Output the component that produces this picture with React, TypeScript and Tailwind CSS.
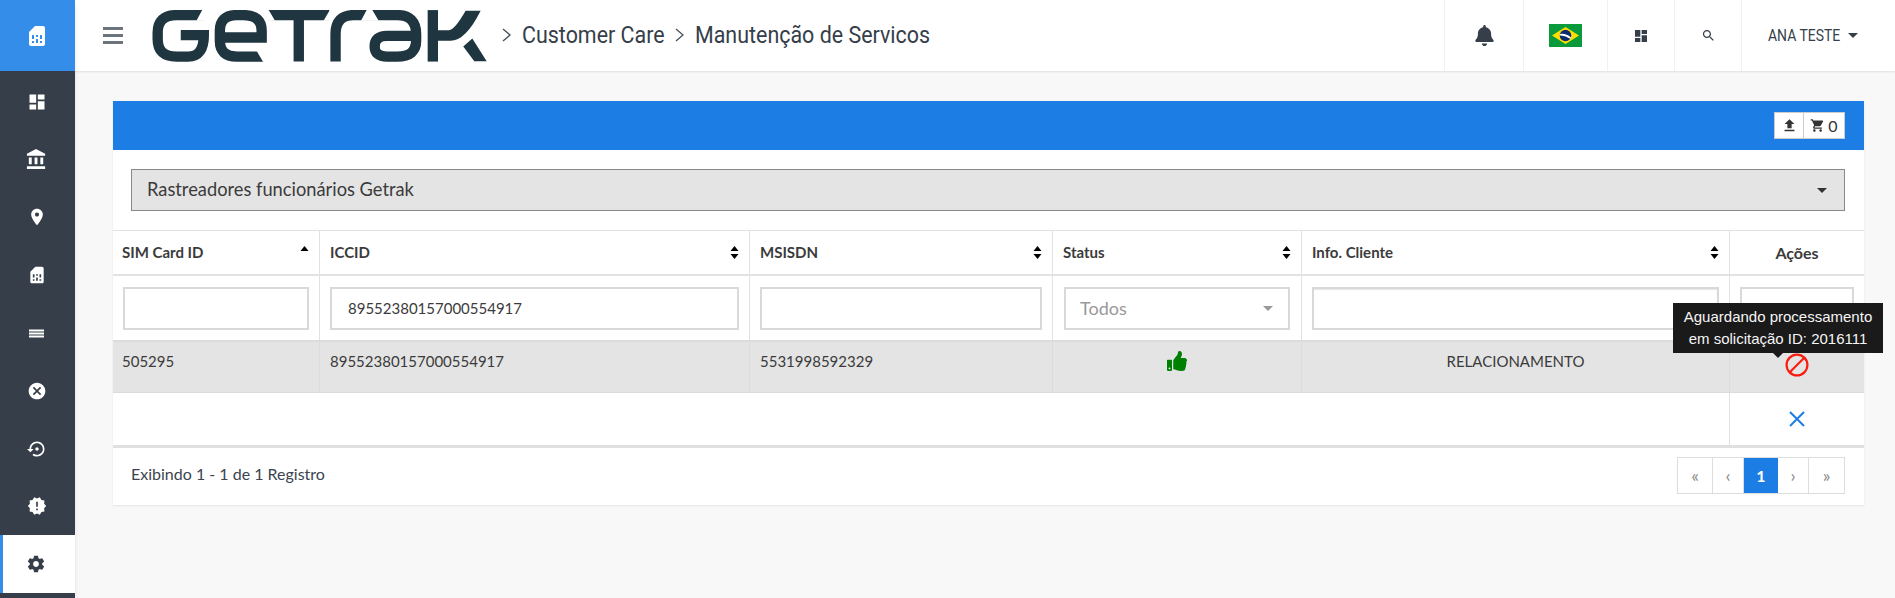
import React from 'react';
import { FaBell, FaThumbsUp } from 'react-icons/fa';

const ICONS = {
  sim: 'M19.99 4c0-1.1-.89-2-1.99-2h-8L4 8v12c0 1.1.9 2 2 2h12c1.1 0 2-.9 2-2l-.01-16zM9 19H7v-2h2v2zm8 0h-2v-2h2v2zm-8-4H7v-4h2v4zm4 4h-2v-4h2v4zm0-6h-2v-2h2v2zm4 2h-2v-4h2v4z',
  dashboard: 'M3 13h8V3H3v10zm0 8h8v-6H3v6zm10 0h8V11h-8v10zm0-18v6h8V3h-8z',
  bank: 'M4 10v7h3v-7H4zm6 0v7h3v-7h-3zM2 22h19v-3H2v3zm14-12v7h3v-7h-3zm-4.5-9L2 6v2h19V6l-9.5-5z',
  place: 'M12 2C8.13 2 5 5.13 5 9c0 5.25 7 13 7 13s7-7.75 7-13c0-3.87-3.13-7-7-7zm0 9.5c-1.38 0-2.5-1.12-2.5-2.5s1.12-2.5 2.5-2.5 2.5 1.12 2.5 2.5-1.12 2.5-2.5 2.5z',
  list: 'M2.5 7h19v2.6h-19zm0 3.7h19v2.6h-19zm0 3.7h19V17h-19z',
  cancel: 'M12 2C6.47 2 2 6.47 2 12s4.47 10 10 10 10-4.47 10-10S17.53 2 12 2zm5 13.59L15.59 17 12 13.41 8.41 17 7 15.59 10.59 12 7 8.41 8.41 7 12 10.59 15.59 7 17 8.41 13.41 12 17 15.59z',
  restore: 'M14 12c0-1.1-.9-2-2-2s-2 .9-2 2 .9 2 2 2 2-.9 2-2zm-2-9c-4.97 0-9 4.03-9 9H0l4 4 4-4H5c0-3.87 3.13-7 7-7s7 3.13 7 7-3.13 7-7 7c-1.51 0-2.91-.49-4.06-1.3l-1.42 1.44C8.04 20.3 9.94 21 12 21c4.97 0 9-4.03 9-9s-4.03-9-9-9z',
  release: 'M23 12l-2.44-2.78.34-3.68-3.61-.82-1.89-3.18L12 3 8.6 1.54 6.71 4.72l-3.61.81.34 3.68L1 12l2.44 2.78-.34 3.69 3.61.82 1.89 3.18L12 21l3.4 1.46 1.89-3.18 3.61-.82-.34-3.68L23 12zm-10 5h-2v-2h2v2zm0-4h-2V7h2v6z',
  settings: 'M19.43 12.98c.04-.32.07-.64.07-.98s-.03-.66-.07-.98l2.11-1.65c.19-.15.24-.42.12-.64l-2-3.46c-.12-.22-.39-.3-.61-.22l-2.49 1c-.52-.4-1.08-.73-1.69-.98l-.38-2.65C14.46 2.18 14.25 2 14 2h-4c-.25 0-.46.18-.49.42l-.38 2.65c-.61.25-1.17.59-1.69.98l-2.49-1c-.23-.09-.49 0-.61.22l-2 3.46c-.13.22-.07.49.12.64l2.11 1.65c-.04.32-.07.65-.07.98s.03.66.07.98l-2.11 1.65c-.19.15-.24.42-.12.64l2 3.46c.12.22.39.3.61.22l2.49-1c.52.4 1.08.73 1.69.98l.38 2.65c.03.24.24.42.49.42h4c.25 0 .46-.18.49-.42l.38-2.65c.61-.25 1.17-.59 1.69-.98l2.49 1c.23.09.49 0 .61-.22l2-3.46c.12-.22.07-.49-.12-.64l-2.11-1.65zM12 15.5c-1.93 0-3.5-1.57-3.5-3.5s1.57-3.5 3.5-3.5 3.5 1.57 3.5 3.5-1.57 3.5-3.5 3.5z',
  search: 'M15.5 14h-.79l-.28-.27C15.41 12.59 16 11.11 16 9.5 16 5.91 13.09 3 9.5 3S3 5.91 3 9.5 5.91 16 9.5 16c1.61 0 3.09-.59 4.23-1.57l.27.28v.79l5 4.99L20.49 19l-4.99-5zm-6 0C7.01 14 5 11.99 5 9.5S7.01 5 9.5 5 14 7.01 14 9.5 11.99 14 9.5 14z',
  upload: 'M9 16h6v-6h4l-7-7-7 7h4zm-4 2h14v2H5z',
  cart: 'M7 18c-1.1 0-1.99.9-1.99 2S5.9 22 7 22s2-.9 2-2-.9-2-2-2zM1 2v2h2l3.6 7.59-1.35 2.45c-.16.28-.25.61-.25.96 0 1.1.9 2 2 2h12v-2H7.42c-.14 0-.25-.11-.25-.25l.03-.12.9-1.63h7.45c.75 0 1.41-.41 1.75-1.03l3.58-6.49c.08-.14.12-.31.12-.48 0-.55-.45-1-1-1H5.21l-.94-2H1zm16 16c-1.1 0-1.99.9-1.99 2s.89 2 1.99 2 2-.9 2-2-.9-2-2-2z',
};

function Icon({ d, size = 20, className = '' }: { d: string; size?: number; className?: string }) {
  return (
    <svg width={size} height={size} viewBox="0 0 24 24" fill="currentColor" className={className}>
      <path d={d} />
    </svg>
  );
}

function Logo() {
  return (
    <svg width="335" height="52" viewBox="457 28 1002 155" fill="none" stroke="#1f3540" strokeWidth="31">
      <path d="M612 43 L530 43 Q474 43 474 95 L474 115 Q474 167 530 167 L565 167 Q612 167 612 103 L543 103" />
      <path d="M798 167 L710 167 Q660 167 660 120 L660 90 Q660 43 710 43 L730 43 Q785 43 785 90 L785 110 L672 110" />
      <path d="M800 43 L988 43 M896 43 L896 182" />
      <path stroke="none" fill="#fff" d="M990 26 L970 60 L991 60 L991 26 Z" />
      <path d="M1006 182 L1006 100 Q1006 43 1060 43 L1106 43" />
      <path d="M1108 43 L1190 43 Q1247 43 1247 100 L1247 120 Q1247 167 1190 167 L1160 167 Q1123 167 1123 137 Q1123 105 1160 105 L1240 105" />
      <path d="M1297 28 L1297 182" />
      <path stroke="none" fill="#1f3540" d="M1312 88 L1345 88 Q1362 88 1395 30 L1440 30 Q1395 120 1350 120 L1312 120 Z M1415 113 L1458 181 L1421 181 L1388 137 Z" />
      <path stroke="none" fill="#fff" d="M608 26 L590 60 L616 60 L616 26 Z M805 26 L825 60 L798 60 L798 26 Z M1100 26 L1082 60 L1108 60 L1108 26 Z M1115 26 L1135 60 L1108 60 L1108 26 Z M770 150 L790 184 L802 184 L802 150 Z" />
    </svg>
  );
}

function Chevron() {
  return (
    <svg width="9" height="14" viewBox="0 0 9 14" fill="none" stroke="#4a5560" strokeWidth="1.4" className="shrink-0">
      <path d="M1 1 L8 7 L1 13" />
    </svg>
  );
}

function Flag() {
  return (
    <svg width="33" height="23" viewBox="0 0 33 23">
      <rect width="33" height="23" fill="#0a9a3c" />
      <path d="M16.5 3 L30 11.5 L16.5 20 L3 11.5 Z" fill="#fedf00" />
      <circle cx="16.5" cy="11.5" r="5.8" fill="#0b2a72" />
      <path d="M11 10 Q17 9 22 13.5 L21.5 15 Q16 11 10.8 11.5 Z" fill="#fff" />
    </svg>
  );
}

function Sort({ up = true, down = true }: { up?: boolean; down?: boolean }) {
  return (
    <svg width="9" height="13" viewBox="0 0 8 13" fill="#000" className="shrink-0">
      {up && <path d="M4 0 L8 5 L0 5 Z" />}
      {down && <path d="M0 8 L8 8 L4 13 Z" />}
    </svg>
  );
}

const sideItems = [
  { d: ICONS.dashboard, size: 20 },
  { d: ICONS.bank, size: 23 },
  { d: ICONS.place, size: 20 },
  { d: ICONS.sim, size: 20 },
  { d: ICONS.list, size: 19 },
  { d: ICONS.cancel, size: 20 },
  { d: ICONS.restore, size: 20 },
  { d: ICONS.release, size: 20 },
];

const columns = [
  { label: 'SIM Card ID', asc: true, pad: 'pl-[9px]' },
  { label: 'ICCID', pad: 'pl-[10px]' },
  { label: 'MSISDN', pad: 'pl-[10px]' },
  { label: 'Status', pad: 'pl-[10px]' },
  { label: 'Info. Cliente', pad: 'pl-[10px]' },
];

const inputClass = 'w-full h-[43px] border-2 border-[#d9d9d9] bg-white px-[13px] text-[15px] text-[#3b3b3b] outline-none';

export default function App() {
  return (
    <div className="flex h-[598px] overflow-hidden bg-[#f8f8f8] font-['Lato',sans-serif] text-[15px] text-[#3b3b3b]">
      <aside className="w-[75px] shrink-0 bg-[#353e49] shadow-md z-10">
        <div className="h-[71px] bg-[#348de8] flex items-center justify-center pr-[2px] text-white">
          <Icon d={ICONS.sim} size={24} />
        </div>
        <nav className="pt-[2px]">
          {sideItems.map((item, i) => (
            <div key={i} className="h-[57.8px] flex items-center justify-center pr-[2px] text-white">
              <Icon d={item.d} size={item.size} />
            </div>
          ))}
          <div className="h-[57.8px] flex items-center justify-center bg-white border-l-[3px] border-[#348de8] text-[#353e49] pr-[6px]">
            <Icon d={ICONS.settings} size={20} />
          </div>
        </nav>
      </aside>

      <div className="flex-1 min-w-0">
        <header className="h-[71px] bg-white shadow-[0_1px_2px_rgba(0,0,0,0.1)] flex items-center relative">
          <button className="ml-[28px] w-[20px] h-[17px] flex flex-col justify-between">
            <span className="h-[3px] bg-[#6c757d]" />
            <span className="h-[3px] bg-[#6c757d]" />
            <span className="h-[3px] bg-[#6c757d]" />
          </button>
          <div className="ml-[29px]">
            <Logo />
          </div>
          <div className="ml-[15px] pb-[2px] flex items-center gap-[11px] font-['Roboto',sans-serif] text-[24px] text-[#353e49] whitespace-nowrap">
            <Chevron />
            <span className="w-[142px] origin-left scale-x-[0.893]">Customer Care</span>
            <Chevron />
            <span className="w-[235px] origin-left scale-x-[0.893]">Manutenção de Servicos</span>
          </div>
          <div className="ml-auto flex h-full font-['Roboto',sans-serif] text-[#353e49]">
            <div className="w-[79px] border-l border-[#f1f1f1] flex items-center justify-center">
              <FaBell size={21} />
            </div>
            <div className="w-[84px] border-l border-[#f1f1f1] flex items-center justify-center">
              <Flag />
            </div>
            <div className="w-[67px] border-l border-[#f1f1f1] flex items-center justify-center">
              <Icon d={ICONS.dashboard} size={16} />
            </div>
            <div className="w-[67px] border-l border-[#f1f1f1] flex items-center justify-center">
              <Icon d={ICONS.search} size={15} />
            </div>
            <div className="w-[154px] border-l border-[#f1f1f1] flex items-center pl-[26px] gap-[7px] text-[17px] whitespace-nowrap">
              <span className="w-[73px] origin-left scale-x-[0.82]">ANA TESTE</span>
              <span className="w-0 h-0 border-x-[5px] border-x-transparent border-t-[5px] border-t-[#353e49]" />
            </div>
          </div>
        </header>

        <main className="pl-[38px] pr-[31px] pt-[30px]">
          <section className="bg-white shadow-[0_1px_2px_rgba(0,0,0,0.08)]">
            <div className="h-[49px] bg-[#1c7ee4] flex items-center justify-end pr-[19px]">
              <div className="flex h-[27px] bg-white border border-[#ccc] text-[#333]">
                <span className="w-[29px] border-r border-[#ccc] flex items-center justify-center">
                  <Icon d={ICONS.upload} size={17} />
                </span>
                <span className="w-[40px] flex items-center justify-center gap-[3px] text-[16px]">
                  <Icon d={ICONS.cart} size={15} />
                  0
                </span>
              </div>
            </div>

            <div className="pl-[18px] pr-[19px] py-[19px]">
              <div className="h-[42px] bg-[#e4e4e4] border border-[#888] flex items-center justify-between pl-[15px] pr-[17px] text-[18.3px]">
                <span>Rastreadores funcionários Getrak</span>
                <span className="w-0 h-0 border-x-[5px] border-x-transparent border-t-[5px] border-t-[#333]" />
              </div>
            </div>

            <table className="w-full table-fixed border-separate border-spacing-0">
              <colgroup>
                <col className="w-[207px]" />
                <col className="w-[430px]" />
                <col className="w-[303px]" />
                <col className="w-[249px]" />
                <col className="w-[428px]" />
                <col className="w-[134px]" />
              </colgroup>
              <thead>
                <tr>
                  {columns.map((c) => (
                    <th key={c.label} className={`h-[46px] border-t border-r border-b-2 border-[#e2e2e2] ${c.pad} pr-[10px] text-left font-bold text-[15px]`}>
                      <div className="flex items-center justify-between">
                        <span>{c.label}</span>
                        {c.asc ? <Sort down={false} /> : <Sort />}
                      </div>
                    </th>
                  ))}
                  <th className="h-[46px] border-t border-b-2 border-[#e2e2e2] text-center font-bold text-[16px]">Ações</th>
                </tr>
                <tr>
                  <td className="h-[64px] border-r border-[#e2e2e2] px-[10px]">
                    <input className={inputClass} />
                  </td>
                  <td className="border-r border-[#e2e2e2] px-[10px]">
                    <input className={`${inputClass} pl-[16px]`} defaultValue="89552380157000554917" />
                  </td>
                  <td className="border-r border-[#e2e2e2] px-[10px]">
                    <input className={inputClass} />
                  </td>
                  <td className="border-r border-[#e2e2e2] px-[11px]">
                    <div className="h-[43px] border-2 border-[#d9d9d9] flex items-center justify-between pl-[14px] pr-[15px] text-[18px] text-[#999]">
                      <span>Todos</span>
                      <span className="w-0 h-0 border-x-[5px] border-x-transparent border-t-[5px] border-t-[#999]" />
                    </div>
                  </td>
                  <td className="border-r border-[#e2e2e2] px-[10px]">
                    <input className={`${inputClass} shadow-[inset_0_1px_1px_rgba(0,0,0,0.1)]`} />
                  </td>
                  <td className="px-[10px]">
                    <button className="w-full h-[43px] border-2 border-[#d9d9d9] text-[16px] text-[#333]">Filtrar</button>
                  </td>
                </tr>
              </thead>
              <tbody>
                <tr className="bg-[#e4e4e4] align-top">
                  <td className="h-[53px] border-t-2 border-b border-r border-[#dcdcdc] pl-[9px] pt-[8px]">505295</td>
                  <td className="border-t-2 border-b border-r border-[#dcdcdc] pl-[10px] pt-[8px]">89552380157000554917</td>
                  <td className="border-t-2 border-b border-r border-[#dcdcdc] pl-[10px] pt-[8px]">5531998592329</td>
                  <td className="border-t-2 border-b border-r border-[#dcdcdc] pt-[9px]">
                    <FaThumbsUp size={20} className="mx-auto text-[#008000]" />
                  </td>
                  <td className="border-t-2 border-b border-r border-[#dcdcdc] pt-[8px] text-center">RELACIONAMENTO</td>
                  <td className="border-t-2 border-b border-[#dcdcdc] relative">
                    <svg width="24" height="24" viewBox="0 0 24 24" fill="none" stroke="#fb1c10" strokeWidth="2.2" className="mx-auto mt-[11px]">
                      <circle cx="12" cy="12" r="10.4" />
                      <path d="M5 19 L19 5" />
                    </svg>
                    <div className="absolute left-[-57px] top-[-39px] w-[210px] h-[50px] bg-[#1a1a1a] text-[#f5f5f5] text-center text-[15px] leading-[22px] pt-[3px] font-['Liberation_Sans',sans-serif] z-20">
                      Aguardando processamento
                      <br />
                      em solicitação ID: 2016111
                      <span className="absolute left-1/2 -translate-x-1/2 top-full w-0 h-0 border-x-[5px] border-x-transparent border-t-[5px] border-t-[#1a1a1a]" />
                    </div>
                  </td>
                </tr>
                <tr>
                  <td colSpan={5} className="h-[55px] border-b-[3px] border-r border-[#e0e0e0]" />
                  <td className="border-b-[3px] border-[#e0e0e0]">
                    <svg width="18" height="18" viewBox="0 0 18 18" fill="none" stroke="#1c7ee4" strokeWidth="2" className="mx-auto">
                      <path d="M2 2 L16 16 M16 2 L2 16" />
                    </svg>
                  </td>
                </tr>
              </tbody>
            </table>

            <div className="h-[57px] flex items-center justify-between pl-[18px] pr-[19px] text-[16px] text-[#3b4450]">
              <span className="pb-[5px]">Exibindo 1 - 1 de 1 Registro</span>
              <div className="flex h-[37px] mb-[2px] border border-[#ddd] text-[#888] text-[18px]">
                <span className="w-[35px] border-r border-[#ddd] flex items-center justify-center">«</span>
                <span className="w-[31px] border-r border-[#ddd] flex items-center justify-center">‹</span>
                <span className="w-[34px] bg-[#1c7ee4] text-white text-[16px] font-bold flex items-center justify-center">1</span>
                <span className="w-[31px] border-r border-[#ddd] flex items-center justify-center">›</span>
                <span className="w-[35px] flex items-center justify-center">»</span>
              </div>
            </div>
          </section>
        </main>
      </div>
    </div>
  );
}
